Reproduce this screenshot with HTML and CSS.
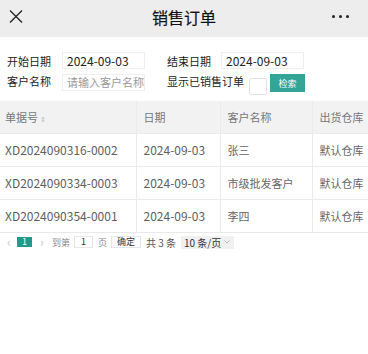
FILE: index.html
```html
<!DOCTYPE html>
<html lang="zh-CN">
<head>
    <meta charset="UTF-8">
    <meta name="viewport" content="width=device-width, initial-scale=1.0">
    <title>销售订单</title>
    <link rel="stylesheet" href="styles.css">
</head>
<body>
    <div class="topbar">
        <span class="close">
            <svg width="14" height="13" viewBox="0 0 14 13"><path d="M1 0.5 L13 12.5 M13 0.5 L1 12.5" stroke="#222" stroke-width="1.3" fill="none"/></svg>
        </span>
        <div class="title">销售订单</div>
        <span class="more">
            <i></i><i></i><i></i>
        </span>
    </div>

    <div class="search">
        <div class="row">
            <label class="lab">开始日期</label>
            <div class="ipt">2024-09-03</div>
            <label class="lab lab2">结束日期</label>
            <div class="ipt">2024-09-03</div>
        </div>
        <div class="row row2">
            <label class="lab">客户名称</label>
            <div class="ipt holder">请输入客户名称</div>
            <label class="lab lab2">显示已销售订单</label>
            <span class="check"></span>
            <button class="btn">检索</button>
        </div>
    </div>

    <div class="tablebox">
        <table class="list">
            <thead>
                <tr>
                    <th class="c1">单据号 <span class="sort">&#8661;</span></th>
                    <th class="c2">日期</th>
                    <th class="c3">客户名称</th>
                    <th class="c4">出货仓库</th>
                    <th class="c5">金额</th>
                </tr>
            </thead>
            <tbody>
                <tr>
                    <td class="c1">XD2024090316-0002</td>
                    <td class="c2">2024-09-03</td>
                    <td class="c3">张三</td>
                    <td class="c4">默认仓库</td>
                    <td class="c5">0.00</td>
                </tr>
                <tr>
                    <td class="c1">XD2024090334-0003</td>
                    <td class="c2">2024-09-03</td>
                    <td class="c3">市级批发客户</td>
                    <td class="c4">默认仓库</td>
                    <td class="c5">0.00</td>
                </tr>
                <tr>
                    <td class="c1">XD2024090354-0001</td>
                    <td class="c2">2024-09-03</td>
                    <td class="c3">李四</td>
                    <td class="c4">默认仓库</td>
                    <td class="c5">0.00</td>
                </tr>
            </tbody>
        </table>
    </div>

    <div class="pager">
        <span class="arrow">&lsaquo;</span>
        <span class="cur">1</span>
        <span class="arrow">&rsaquo;</span>
        <span class="skip">到第</span>
        <span class="pbox">1</span>
        <span class="unit">页</span>
        <span class="ok">确定</span>
        <span class="count">共 3 条</span>
        <span class="limit">10 条/页
            <svg width="6" height="4" viewBox="0 0 6 4"><path d="M0.5 0.5 L3 3 L5.5 0.5" stroke="#aaa" stroke-width="0.8" fill="none"/></svg>
        </span>
    </div>
</body>
</html>
```

FILE: styles.css
```css
*{
    margin: 0;
    padding: 0;
    box-sizing: border-box;
}
html,body{
    width: 100%;
    height: 100%;
}
body{
    background: #fff;
    font-family: "Noto Sans CJK SC", "Noto Sans", sans-serif;
    color: #333;
    overflow: hidden;
}

/* 顶部标题栏 */
.topbar{
    display: grid;
    grid-template-columns: 1fr auto 1fr;
    align-items: center;
    height: 37px;
    padding: 0 9px 4px;
    background: #ededed;
}
.topbar .close{
    display: flex;
}
.topbar .title{
    font-size: 16px;
    font-weight: 400;
    color: #111;
    -webkit-text-stroke: 0.2px #111;
}
.topbar .more{
    display: flex;
    justify-content: flex-end;
    gap: 4px;
    padding-right: 10px;
}
.topbar .more i{
    width: 3px;
    height: 3px;
    border-radius: 50%;
    background: #222;
}

/* 搜索条件 */
.search{
    padding: 15px 7px 0;
}
.row{
    display: flex;
    align-items: center;
    height: 17px;
}
.row2{
    align-items: flex-start;
    height: 21px;
    margin-top: 5px;
}
.lab{
    width: 55px;
    font-size: 11px;
    line-height: 14px;
    color: #222;
}
.lab2{
    margin-left: 22px;
    width: 54px;
}
.row2 .lab2{
    width: auto;
}
.ipt{
    width: 83px;
    height: 17px;
    border: 1px solid #eee;
    padding-left: 4px;
    font-size: 12px;
    line-height: 15px;
    color: #222;
}
.holder{
    color: #999;
    font-size: 11px;
    white-space: nowrap;
    overflow: hidden;
}
.check{
    width: 18px;
    height: 17px;
    margin: 4px 0 0 5px;
    border: 1px solid #e2e2e2;
    border-radius: 2px;
}
.btn{
    width: 35px;
    height: 18px;
    margin-left: 3px;
    border: none;
    background: #33a597;
    color: #fff;
    font-family: inherit;
    font-size: 9px;
}

/* 表格 */
.tablebox{
    margin-top: 6px;
    overflow: hidden;
    border-bottom: 1px solid #e8e8e8;
}
.list{
    width: 460px;
    border-collapse: collapse;
    table-layout: fixed;
    font-size: 11px;
    color: #666;
}
.list th,.list td{
    height: 33px;
    padding: 0 7px;
    text-align: left;
    font-weight: normal;
    white-space: nowrap;
    border-right: 1px solid #ebebeb;
    border-bottom: 1px solid #ebebeb;
}
.list th{
    height: 32px;
    background: #f2f2f2;
    color: #777;
}
.list td.c1,.list td.c2{
    font-size: 12px;
    color: #5e5e5e;
}
.list .c1{
    width: 136px;
    padding-left: 5px;
}
.list .c2{
    width: 84px;
}
.list .c3{
    width: 92px;
}
.list .c4{
    width: 92px;
}
.list tbody tr:last-child td{
    border-bottom: none;
}
.sort{
    font-size: 7px;
    color: #bbb;
    vertical-align: middle;
}

/* 分页 */
.pager{
    display: flex;
    align-items: center;
    height: 18px;
    padding-left: 7px;
    font-size: 9px;
    color: #888;
}
.pager .arrow{
    font-size: 13px;
    color: #ccc;
    line-height: 10px;
}
.pager .cur{
    width: 15px;
    height: 10px;
    margin: 0 8px 0 6px;
    background: #1f9a8c;
    color: #fff;
    text-align: center;
    line-height: 10px;
}
.pager .skip{
    margin-left: 8px;
}
.pager .pbox{
    width: 19px;
    height: 12px;
    margin-left: 4px;
    border: 1px solid #e6e6e6;
    color: #333;
    text-align: center;
    line-height: 10px;
}
.pager .unit{
    margin-left: 5px;
}
.pager .ok{
    height: 12px;
    margin-left: 4px;
    padding: 0 5px;
    border: 1px solid #e6e6e6;
    color: #333;
    line-height: 10px;
}
.pager .count{
    margin-left: 5px;
    font-size: 10px;
    color: #555;
}
.pager .limit{
    display: flex;
    align-items: center;
    gap: 3px;
    height: 13px;
    margin-left: 5px;
    padding: 0 4px 0 3px;
    background: #f0f0f0;
    color: #333;
    font-size: 10px;
}
```
